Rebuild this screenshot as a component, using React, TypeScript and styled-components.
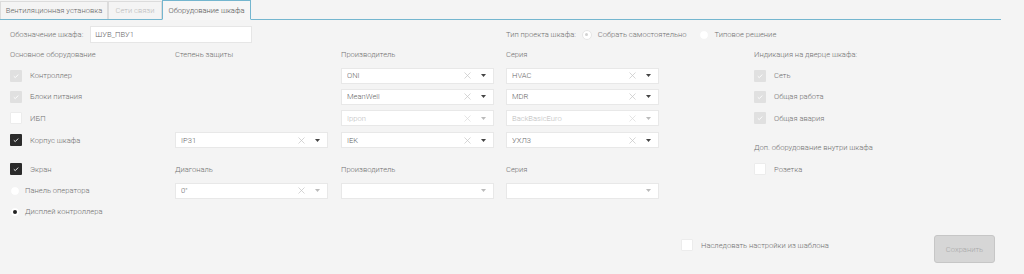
import React from 'react';
import styled, { createGlobalStyle } from 'styled-components';

const Global = createGlobalStyle`
  html, body { margin: 0; padding: 0; background: #f4f4f4; }
  body { font-family: Roboto, "Noto Sans", sans-serif; font-size: 7.6px; font-weight: 300; color: #777; }
  * { box-sizing: border-box; }
`;

const Page = styled.div`
  width: 1024px;
  height: 274px;
  background: #f4f4f4;
  overflow: hidden;
  display: flex;
  flex-direction: column;
`;

const TabBar = styled.div`
  display: flex;
  align-items: flex-end;
  width: 1001px;
  height: 20px;
  border-bottom: 1px solid #74b6cf;
`;

const Tab = styled.div<{ $active?: boolean; $disabled?: boolean; $w: number }>`
  width: ${p => p.$w}px;
  height: ${p => (p.$active ? 20 : 18)}px;
  display: flex;
  align-items: center;
  justify-content: center;
  border: 1px solid ${p => (p.$active ? '#74b6cf' : '#dcdcdc')};
  border-bottom: ${p => (p.$active ? '1px solid #f6f6f6' : 'none')};
  margin-bottom: ${p => (p.$active ? '-1px' : '0')};
  background: ${p => (p.$active ? '#f6f6f6' : '#f4f4f4')};
  color: ${p => (p.$disabled ? '#bbb' : p.$active ? '#555' : '#666')};
  white-space: nowrap;
`;

const TopRow = styled.div`
  display: flex;
  align-items: center;
  height: 17px;
  margin-top: 6px;
  padding-left: 10px;
`;

const TopGroup = styled.div<{ $w?: number }>`
  display: flex;
  align-items: center;
  ${p => (p.$w ? `width: ${p.$w}px;` : '')}
`;

const Label = styled.span<{ $color?: string }>`
  color: ${p => p.$color || '#707070'};
  white-space: nowrap;
`;

const TextInput = styled.div`
  margin-left: 7px;
  width: 162px;
  height: 17px;
  background: #fff;
  border: 1px solid #e6e6e6;
  padding-left: 4px;
  display: flex;
  align-items: center;
  color: #666;
`;

const RadioRow = styled.div`
  display: flex;
  align-items: center;
  gap: 6px;
  margin-left: 6px;
`;

const RadioItem = styled.div`
  display: flex;
  align-items: center;
  gap: 6px;
  margin-right: 6px;
`;

const RadioCircle = styled.span<{ $state: 'off' | 'on' | 'disabledOn' }>`
  width: 10px;
  height: 10px;
  border-radius: 50%;
  background: #fff;
  border: 1px solid ${p => (p.$state === 'disabledOn' ? '#e6e6e6' : '#f4f4f4')};
  display: flex;
  align-items: center;
  justify-content: center;
  flex: none;
  &::after {
    content: '';
    display: ${p => (p.$state === 'off' ? 'none' : 'block')};
    width: ${p => (p.$state === 'on' ? 4 : 3)}px;
    height: ${p => (p.$state === 'on' ? 4 : 3)}px;
    border-radius: 50%;
    background: ${p => (p.$state === 'on' ? '#222' : '#d2d2d2')};
  }
`;

const Grid = styled.div`
  display: grid;
  padding-left: 10px;
  grid-template-columns: 165px 166px 165px 248px 1fr;
  grid-template-rows: 22px 21px 21px 22px 22px 7px 22px 21px 21px;
`;

const Cell = styled.div<{ $col: number; $row: number; $end?: boolean }>`
  grid-column: ${p => p.$col};
  grid-row: ${p => p.$row};
  display: flex;
  align-items: ${p => (p.$end ? 'flex-end' : 'center')};
  min-width: 0;
`;

const CheckRow = styled.div<{ $gap?: number }>`
  display: flex;
  align-items: center;
  gap: ${p => p.$gap ?? 8}px;
`;

const Box = styled.span<{ $state: 'on' | 'off' | 'disabled' }>`
  width: 12px;
  height: 12px;
  flex: none;
  border-radius: 1px;
  background: ${p => (p.$state === 'on' ? '#2b2b2b' : p.$state === 'disabled' ? '#e0e0e0' : '#fff')};
  border: 1px solid ${p => (p.$state === 'off' ? '#ececec' : 'transparent')};
  display: flex;
  align-items: center;
  justify-content: center;
`;

const Select = styled.div<{ $disabled?: boolean }>`
  width: 153px;
  height: 16px;
  background: #fff;
  border: 1px solid #e8e8e8;
  display: flex;
  align-items: center;
  padding-left: 5px;
  color: ${p => (p.$disabled ? '#bbb' : '#666')};
`;

const SelectValue = styled.span`
  flex: 1;
  white-space: nowrap;
  overflow: hidden;
`;

const IconSlot = styled.span<{ $w?: number }>`
  width: ${p => p.$w ?? 16}px;
  height: 14px;
  display: flex;
  align-items: center;
  justify-content: center;
  flex: none;
`;

const DopLabel = styled.span`
  color: #707070;
  white-space: nowrap;
  margin-bottom: -1px;
`;

const Footer = styled.div`
  display: flex;
  align-items: flex-start;
  padding-left: 681px;
  padding-right: 29px;
  margin-top: 13px;
`;

const FooterCheck = styled.div`
  flex: 1;
  display: flex;
  align-items: center;
  gap: 8px;
  margin-top: 4px;
`;

const SaveButton = styled.button`
  width: 61px;
  height: 28px;
  background: #d6d6d6;
  border: 1px solid #c6c6c6;
  border-radius: 3px;
  color: #a8a8a8;
  font-family: Roboto, "Noto Sans", sans-serif;
  font-size: 7.6px;
  font-weight: 300;
  padding: 0;
`;

const Check = ({ state }: { state: 'on' | 'off' | 'disabled' }) => (
  <Box $state={state}>
    {state !== 'off' && (
      <svg width="10" height="10" viewBox="0 0 10 10">
        <polyline points="2.8,5.3 4.3,6.6 7.2,3.6" fill="none" stroke="#fff" strokeWidth="0.9" />
      </svg>
    )}
  </Box>
);

const ClearIcon = ({ light }: { light?: boolean }) => (
  <IconSlot>
    <svg width="7" height="7" viewBox="0 0 7 7">
      <path d="M0.5 0.5 L6.5 6.5 M6.5 0.5 L0.5 6.5" stroke={light ? '#dadada' : '#c4c4c4'} strokeWidth="0.7" />
    </svg>
  </IconSlot>
);

const Arrow = ({ light }: { light?: boolean }) => (
  <IconSlot>
    <svg width="5" height="3" viewBox="0 0 5 3">
      <path d="M0 0 L5 0 L2.5 3 Z" fill={light ? '#bbb' : '#444'} />
    </svg>
  </IconSlot>
);

const Dropdown = ({ value, clearable = true, disabled, lightArrow }: { value?: string; clearable?: boolean; disabled?: boolean; lightArrow?: boolean }) => (
  <Select $disabled={disabled}>
    <SelectValue>{value}</SelectValue>
    {clearable && <ClearIcon light={disabled} />}
    <Arrow light={disabled || lightArrow} />
    <IconSlot $w={2} />
  </Select>
);

const CheckItem = ({ state, label }: { state: 'on' | 'off' | 'disabled'; label: string }) => (
  <CheckRow>
    <Check state={state} />
    <Label>{label}</Label>
  </CheckRow>
);

export default function App() {
  return (
    <Page>
      <Global />
      <TabBar>
        <Tab $w={108}>Вентиляционная установка</Tab>
        <Tab $w={54} $disabled>Сети связи</Tab>
        <Tab $w={89} $active>Оборудование шкафа</Tab>
      </TabBar>

      <TopRow>
        <TopGroup $w={496}>
          <Label>Обозначение шкафа:</Label>
          <TextInput>ШУВ_ПВУ1</TextInput>
        </TopGroup>
        <TopGroup>
          <Label>Тип проекта шкафа:</Label>
          <RadioRow>
            <RadioItem>
              <RadioCircle $state="disabledOn" />
              <Label>Собрать самостоятельно</Label>
            </RadioItem>
            <RadioItem>
              <RadioCircle $state="off" />
              <Label>Типовое решение</Label>
            </RadioItem>
          </RadioRow>
        </TopGroup>
      </TopRow>

      <Grid>
        <Cell $col={1} $row={1}><Label>Основное оборудование</Label></Cell>
        <Cell $col={2} $row={1}><Label>Степень защиты</Label></Cell>
        <Cell $col={3} $row={1}><Label>Производитель</Label></Cell>
        <Cell $col={4} $row={1}><Label>Серия</Label></Cell>
        <Cell $col={5} $row={1}><Label>Индикация на дверце шкафа:</Label></Cell>

        <Cell $col={1} $row={2}><CheckItem state="disabled" label="Контроллер" /></Cell>
        <Cell $col={3} $row={2}><Dropdown value="ONI" /></Cell>
        <Cell $col={4} $row={2}><Dropdown value="HVAC" /></Cell>
        <Cell $col={5} $row={2}><CheckItem state="disabled" label="Сеть" /></Cell>

        <Cell $col={1} $row={3}><CheckItem state="disabled" label="Блоки питания" /></Cell>
        <Cell $col={3} $row={3}><Dropdown value="MeanWell" /></Cell>
        <Cell $col={4} $row={3}><Dropdown value="MDR" /></Cell>
        <Cell $col={5} $row={3}><CheckItem state="disabled" label="Общая работа" /></Cell>

        <Cell $col={1} $row={4}><CheckItem state="off" label="ИБП" /></Cell>
        <Cell $col={3} $row={4}><Dropdown value="Ippon" disabled /></Cell>
        <Cell $col={4} $row={4}><Dropdown value="BackBasicEuro" disabled /></Cell>
        <Cell $col={5} $row={4}><CheckItem state="disabled" label="Общая авария" /></Cell>

        <Cell $col={1} $row={5}><CheckItem state="on" label="Корпус шкафа" /></Cell>
        <Cell $col={2} $row={5}><Dropdown value="IP31" /></Cell>
        <Cell $col={3} $row={5}><Dropdown value="IEK" /></Cell>
        <Cell $col={4} $row={5}><Dropdown value="УХЛ3" /></Cell>
        <Cell $col={5} $row={5} $end><DopLabel>Доп. оборудование внутри шкафа</DopLabel></Cell>

        <Cell $col={1} $row={7}><CheckItem state="on" label="Экран" /></Cell>
        <Cell $col={2} $row={7}><Label>Диагональ</Label></Cell>
        <Cell $col={3} $row={7}><Label>Производитель</Label></Cell>
        <Cell $col={4} $row={7}><Label>Серия</Label></Cell>
        <Cell $col={5} $row={7}><CheckItem state="off" label="Розетка" /></Cell>

        <Cell $col={1} $row={8}>
          <CheckRow $gap={5}>
            <RadioCircle $state="off" />
            <Label>Панель оператора</Label>
          </CheckRow>
        </Cell>
        <Cell $col={2} $row={8}><Dropdown value={'0"'} lightArrow /></Cell>
        <Cell $col={3} $row={8}><Dropdown clearable={false} lightArrow /></Cell>
        <Cell $col={4} $row={8}><Dropdown clearable={false} lightArrow /></Cell>

        <Cell $col={1} $row={9}>
          <CheckRow $gap={5}>
            <RadioCircle $state="on" />
            <Label>Дисплей контроллера</Label>
          </CheckRow>
        </Cell>
      </Grid>

      <Footer>
        <FooterCheck>
          <Check state="off" />
          <Label>Наследовать настройки из шаблона</Label>
        </FooterCheck>
        <SaveButton>Сохранить</SaveButton>
      </Footer>
    </Page>
  );
}
